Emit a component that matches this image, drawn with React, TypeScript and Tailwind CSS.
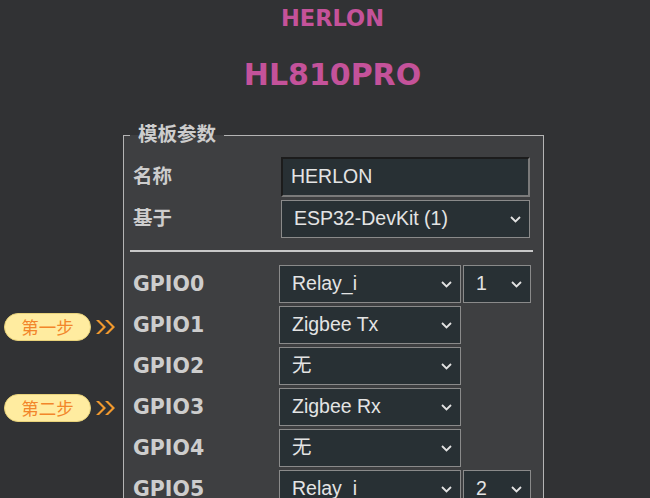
import React from 'react';

// Template editor rows (GPIO -> component / index)
const ROWS: { pin: string; fn: string; idx?: string }[] = [
  { pin: 'GPIO0', fn: 'Relay_i', idx: '1' },
  { pin: 'GPIO1', fn: 'Zigbee Tx' },
  { pin: 'GPIO2', fn: '无' },
  { pin: 'GPIO3', fn: 'Zigbee Rx' },
  { pin: 'GPIO4', fn: '无' },
  { pin: 'GPIO5', fn: 'Relay_i', idx: '2' },
  { pin: 'GPIO9', fn: '无' },
];

const Chevron = () => (
  <svg width="11" height="7" viewBox="0 0 11 7" className="shrink-0">
    <path d="M1 1 L5.5 5.5 L10 1" fill="none" stroke="#e2e2e2" strokeWidth="1.8" />
  </svg>
);

const FakeSelect = ({ value, w }: { value: string; w: string }) => (
  <div
    className={`${w} h-[38px] flex items-center justify-between pl-[12px] pr-[8px] bg-[#283034] border border-[#8a8a8a] text-[#e4e4e4] text-[19.5px] font-['Liberation_Sans','Noto_Sans_CJK_SC',sans-serif]`}
  >
    <span className="leading-none">{value}</span>
    <Chevron />
  </div>
);

const StepBadge = ({ text, top }: { text: string; top: string }) => (
  <div className={`absolute left-[4px] ${top} flex items-center gap-[4px]`}>
    <div className="w-[87px] h-[28px] rounded-full bg-[#ffeca0] border border-[#e8d27a] flex items-center justify-center text-[#f2862a] text-[17.5px] font-['Noto_Sans_CJK_SC',sans-serif]">
      {text}
    </div>
    <svg width="22" height="16" viewBox="0 0 22 16">
      <path d="M1 1 L8 8 L1 15 L4 15 L11 8 L4 1 Z" fill="#f29a2e" />
      <path d="M10 1 L17 8 L10 15 L13 15 L20 8 L13 1 Z" fill="#f29a2e" />
    </svg>
  </div>
);

export default function App() {
  const labelFont = "font-['DejaVu_Sans','Noto_Sans_CJK_SC',sans-serif] font-bold text-[#cdcdcd]";

  return (
    <div className="relative w-[650px] h-[498px] overflow-hidden bg-[#313234]">
      <div className="ml-[123px] w-[419px]">
        {/* Titles */}
        <div className="h-[36px] flex items-center justify-center text-[22.5px] font-['DejaVu_Sans',sans-serif] font-bold text-[#c4529a] leading-none pt-[1px]">
          HERLON
        </div>
        <div className="h-[78px] flex items-center justify-center text-[30px] font-['DejaVu_Sans',sans-serif] font-bold text-[#c4529a] leading-none">
          HL810PRO
        </div>

        {/* Template params */}
        <fieldset className="mt-[9px] border border-[#b4b4b4] bg-[#3e3f41] pl-[6px] pr-[10px] pb-[20px]">
          <legend className={`px-[8px] leading-[24px] text-[19.5px] ${labelFont}`}>模板参数</legend>
          <div className="pl-[3px] pt-[10px]">
            <div className="flex items-center">
              <div className={`w-[148px] text-[19.5px] ${labelFont}`}>名称</div>
              <div className="w-[249px] h-[40px] flex items-center pl-[8px] bg-[#283034] border-2 border-t-[#1c1c1c] border-l-[#1c1c1c] border-r-[#7a7a7a] border-b-[#7a7a7a] text-[#e4e4e4] text-[19.5px] font-['Liberation_Sans',sans-serif]">
                HERLON
              </div>
            </div>
            <div className="flex items-center mt-[3px]">
              <div className={`w-[148px] text-[19.5px] ${labelFont}`}>基于</div>
              <FakeSelect value="ESP32-DevKit (1)" w="w-[249px]" />
            </div>

            <div className="-ml-[3px] w-[403px] h-[2px] bg-[#c8c8c8] mt-[12px] mb-[13px]" />

            <div className="flex flex-col gap-[3px]">
              {ROWS.map((r) => (
                <div key={r.pin} className="flex items-center">
                  <div className={`w-[146px] text-[20.5px] ${labelFont}`}>{r.pin}</div>
                  <FakeSelect value={r.fn} w="w-[182px]" />
                  {r.idx && (
                    <div className="ml-[2px]">
                      <FakeSelect value={r.idx} w="w-[68px]" />
                    </div>
                  )}
                </div>
              ))}
            </div>
          </div>
        </fieldset>
      </div>

      <StepBadge text="第一步" top="top-[313px]" />
      <StepBadge text="第二步" top="top-[394px]" />
    </div>
  );
}
